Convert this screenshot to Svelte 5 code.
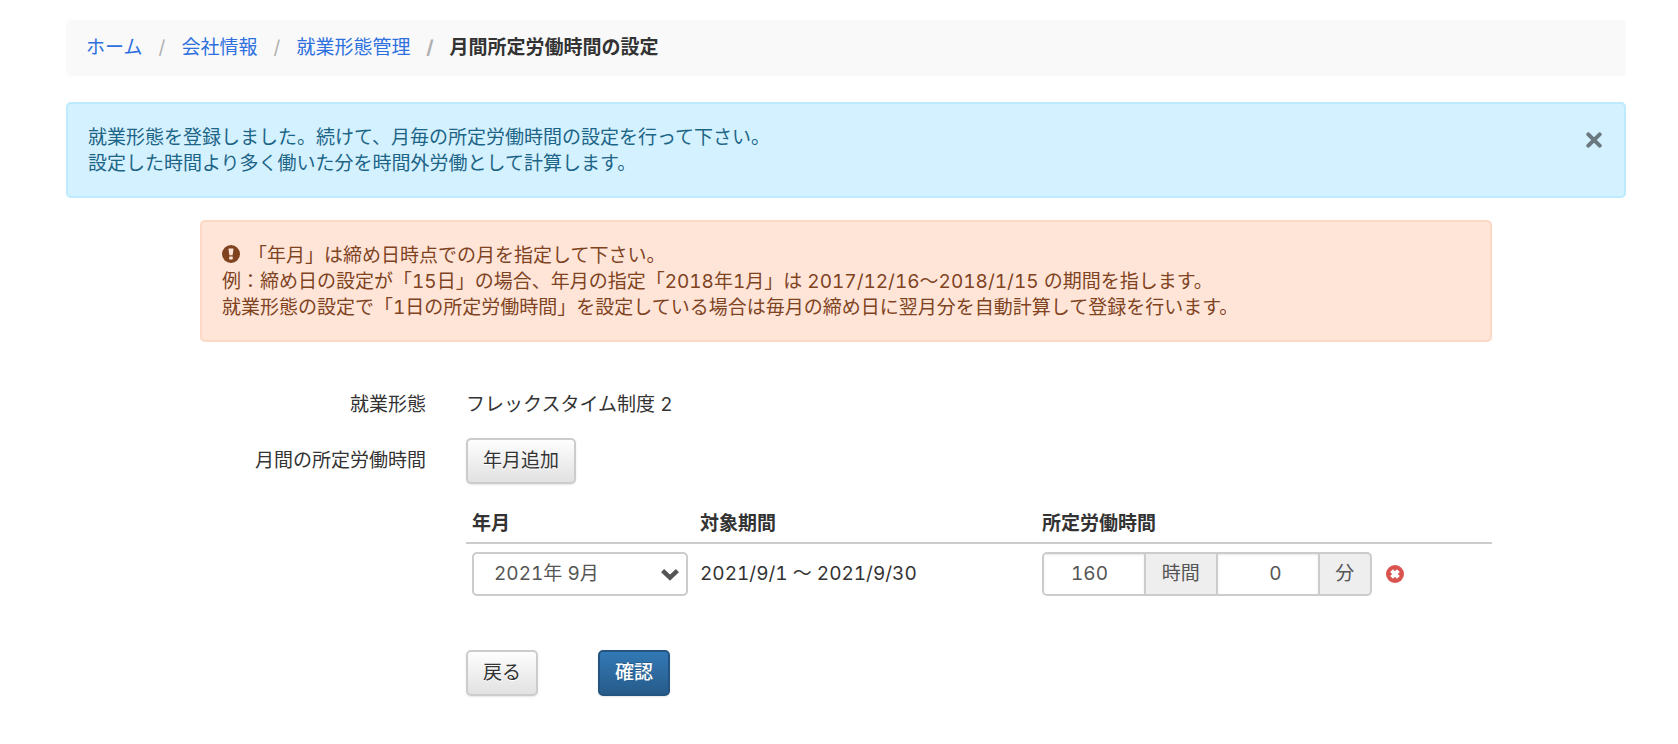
<script>
    const crumbs = [
        { label: 'ホーム', href: '#home' },
        { label: '会社情報', href: '#company' },
        { label: '就業形態管理', href: '#employment-types' },
    ];

    const months = ['2021年 8月', '2021年 9月', '2021年 10月'];

    let showInfo = true;
    let nextId = 2;
    let rows = [
        { id: 1, month: '2021年 9月', hours: '160', minutes: '0' },
    ];

    // "2021年 9月" -> "2021/9/1 〜 2021/9/30"
    const period = (month) => {
        const [y, m] = month.match(/\d+/g).map(Number);
        const last = new Date(y, m, 0).getDate();
        return `${y}/${m}/1 〜 ${y}/${m}/${last}`;
    }

    const addRow = () => {
        rows = [...rows, { id: nextId++, month: months[1], hours: '160', minutes: '0' }];
    }

    const removeRow = (id) => {
        rows = rows.filter((r) => r.id !== id);
    }
</script>

<div class="page">
    <nav aria-label="breadcrumb">
        <ol class="breadcrumb">
            {#each crumbs as crumb}
                <li><a href={crumb.href}>{crumb.label}</a></li>
            {/each}
            <li class="current" aria-current="page">月間所定労働時間の設定</li>
        </ol>
    </nav>

    {#if showInfo}
        <div class="alert info" role="status">
            <p>
                就業形態を登録しました。続けて、月毎の所定労働時間の設定を行って下さい。<br />
                設定した時間より多く働いた分を時間外労働として計算します。
            </p>
            <button type="button" class="close" aria-label="閉じる" on:click={() => (showInfo = false)}>
                <svg width="16" height="16" viewBox="0 0 16 16" aria-hidden="true">
                    <path d="M2.3 2.3 13.7 13.7M13.7 2.3 2.3 13.7" stroke="currentColor" stroke-width="4" stroke-linecap="round" />
                </svg>
            </button>
        </div>
    {/if}

    <div class="content">
        <div class="alert note">
            <p>
                <svg class="mark" width="18" height="18" viewBox="0 0 18 18" aria-hidden="true">
                    <circle cx="9" cy="9" r="9" fill="currentColor" />
                    <path d="M6.5 4.2Q6.4 3.6 7 3.6H11Q11.6 3.6 11.5 4.2L10.6 10.2H7.4Z" fill="#fee5d8" />
                    <rect x="7.2" y="11.4" width="3.6" height="3" rx="0.6" fill="#fee5d8" />
                </svg>
                「年月」は締め日時点での月を指定して下さい。<br />
                例：締め日の設定が「15日」の場合、年月の指定「2018年1月」は 2017/12/16〜2018/1/15 の期間を指します。<br />
                就業形態の設定で「1日の所定労働時間」を設定している場合は毎月の締め日に翌月分を自動計算して登録を行います。
            </p>
        </div>

        <form on:submit|preventDefault>
            <div class="form-row">
                <span class="form-label">就業形態</span>
                <div>フレックスタイム制度 2</div>
            </div>
            <div class="form-row">
                <span class="form-label">月間の所定労働時間</span>
                <div><button type="button" class="btn" on:click={addRow}>年月追加</button></div>
            </div>

            <div class="form-body">
                <table>
                    <thead>
                        <tr>
                            <th class="col-month" scope="col">年月</th>
                            <th class="col-period" scope="col">対象期間</th>
                            <th scope="col">所定労働時間</th>
                        </tr>
                    </thead>
                    <tbody>
                        {#each rows as row (row.id)}
                            <tr>
                                <td>
                                    <div class="select">
                                        <select aria-label="年月" bind:value={row.month}>
                                            {#each months as month}
                                                <option value={month}>{month}</option>
                                            {/each}
                                        </select>
                                        <svg width="18" height="12" viewBox="0 0 18 12" aria-hidden="true">
                                            <path d="M1.6 1.6 9 8.6 16.4 1.6" fill="none" stroke="currentColor" stroke-width="4.4" />
                                        </svg>
                                    </div>
                                </td>
                                <td>{period(row.month)}</td>
                                <td>
                                    <div class="time">
                                        <div class="input-group">
                                            <input id="hours{row.id}" type="text" inputmode="numeric" bind:value={row.hours} />
                                            <label for="hours{row.id}">時間</label>
                                            <input id="minutes{row.id}" type="text" inputmode="numeric" bind:value={row.minutes} />
                                            <label for="minutes{row.id}">分</label>
                                        </div>
                                        <button type="button" class="remove" aria-label="削除" on:click={() => removeRow(row.id)}>
                                            <svg width="18" height="18" viewBox="0 0 18 18" aria-hidden="true">
                                                <circle cx="9" cy="9" r="9" fill="currentColor" />
                                                <path d="M5.6 5.6 12.4 12.4M12.4 5.6 5.6 12.4" stroke="#fff" stroke-width="4" />
                                            </svg>
                                        </button>
                                    </div>
                                </td>
                            </tr>
                        {/each}
                    </tbody>
                </table>

                <div class="actions">
                    <button type="button" class="btn">戻る</button>
                    <button type="submit" class="btn primary">確認</button>
                </div>
            </div>
        </form>
    </div>
</div>

<style>
    :global(body) {
        margin: 0;
        background: #fff;
    }

    .page {
        padding: 20px 52px 40px 66px;
        color: #333;
        font-family: Inter, 'Noto Sans CJK JP', sans-serif;
        font-size: 19px;
        font-variant-numeric: tabular-nums;
        line-height: 26px;
    }

    button, input, select {
        box-sizing: border-box;
        margin: 0;
        font: inherit;
        font-variant-numeric: inherit;
    }

    .breadcrumb {
        display: flex;
        margin: 0 0 26px;
        padding: 15px 20px;
        list-style: none;
        background: #f9f9f9;
        border-radius: 5px;
    }

    .breadcrumb li {
        display: flex;
    }

    .breadcrumb li + li::before {
        content: '/';
        width: 39px;
        color: #b0b0b0;
        text-align: center;
    }

    .breadcrumb a {
        color: #2d70de;
        text-decoration: none;
    }

    .current {
        font-weight: bold;
    }

    .alert {
        display: flex;
        justify-content: space-between;
        align-items: flex-start;
        padding: 21px 20px 19px;
        border: 2px solid;
        border-radius: 5px;
    }

    .alert p {
        margin: 0;
    }

    .info {
        margin-bottom: 22px;
        color: #1c6587;
        background: #d4f1ff;
        border-color: #bdeaff;
    }

    .note {
        color: #7f431f;
        background: #fee5d8;
        border-color: #fdd8c5;
    }

    .mark {
        margin-right: 3px;
        vertical-align: -1px;
    }

    .close, .remove {
        display: flex;
        padding: 0;
        background: none;
        border: 0;
        cursor: pointer;
    }

    .close {
        padding: 7px 2px;
        color: #6a797f;
    }

    .remove {
        color: #d9534f;
    }

    .content {
        margin: 0 134px;
    }

    form {
        margin-top: 40px;
    }

    .form-row {
        display: grid;
        grid-template-columns: 226px 1fr;
        column-gap: 40px;
        align-items: center;
        min-height: 46px;
        margin-bottom: 10px;
    }

    .form-label {
        text-align: right;
    }

    .form-body {
        margin-left: 266px;
    }

    .btn {
        padding: 8px 15px;
        height: 46px;
        color: #333;
        text-shadow: 0 1px 0 #fff;
        background: linear-gradient(#fff, #e0e0e0) border-box;
        border: 2px solid #ccc;
        border-radius: 5px;
        box-shadow: 0 1px 2px rgba(0, 0, 0, 0.1);
        cursor: pointer;
    }

    .primary {
        color: #fff;
        font-weight: 500;
        text-shadow: 0 -1px 0 rgba(0, 0, 0, 0.2);
        background: linear-gradient(#337ab7, #265a88) border-box;
        border-color: #245580;
    }

    table {
        width: 100%;
        margin-top: 20px;
        table-layout: fixed;
        border-collapse: separate;
        border-spacing: 0;
    }

    th {
        padding: 7px 6px 5px;
        text-align: left;
        border-bottom: 2px solid #ccc;
    }

    td {
        padding: 8px 6px;
    }

    .col-month {
        width: 216px;
    }

    .col-period {
        width: 330px;
    }

    .select {
        position: relative;
        color: #555;
    }

    .select select {
        display: block;
        width: 100%;
        height: 44px;
        padding: 0 40px 0 20px;
        color: #555;
        background: #fff;
        border: 2px solid #ccc;
        border-radius: 5px;
        appearance: none;
    }

    .select svg {
        position: absolute;
        top: 17px;
        right: 9px;
        pointer-events: none;
    }

    .time {
        display: flex;
        align-items: center;
        gap: 14px;
    }

    .input-group {
        display: flex;
        box-sizing: border-box;
        width: 330px;
        height: 44px;
        overflow: hidden;
        color: #555;
        background: #eee;
        border: 2px solid #ccc;
        border-radius: 5px;
    }

    .input-group input {
        width: 100px;
        padding: 0 36px 0 10px;
        color: #555;
        text-align: right;
        background: #fff;
        border: 0;
        box-shadow: inset 0 1px 2px rgba(0, 0, 0, 0.1);
    }

    .input-group label {
        flex: 1 0 auto;
        padding: 0 14px;
        line-height: 40px;
        text-align: center;
        border-left: 2px solid #ccc;
    }

    .input-group label:not(:last-child) {
        border-right: 2px solid #ccc;
    }

    .actions {
        display: flex;
        gap: 60px;
        margin-top: 46px;
    }
</style>
